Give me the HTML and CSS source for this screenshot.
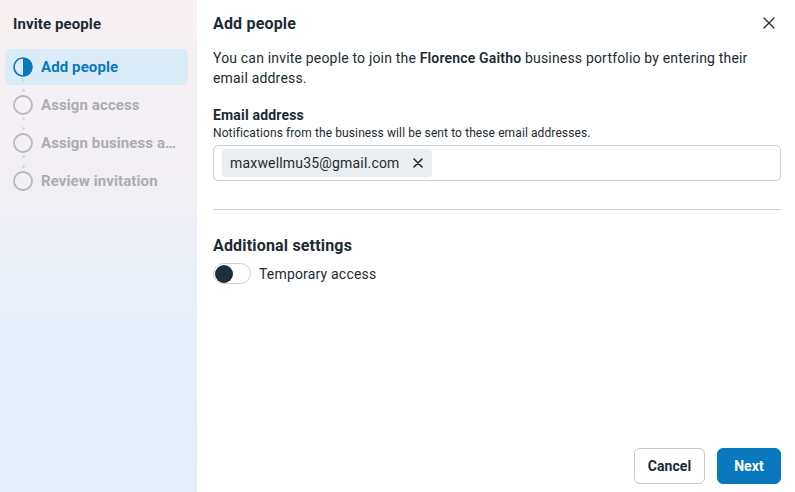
FILE: index.html
```html
<!DOCTYPE html>
<html>
<head>
<meta charset="utf-8">
<link rel="stylesheet" href="styles.css">
</head>
<body>
<div class="app">
  <aside class="sidebar">
    <div class="side-title">Invite people</div>
    <ul class="steps">
      <li class="step active">
        <svg class="step-icon" width="20" height="20" viewBox="0 0 20 20"><circle cx="10" cy="10" r="9" fill="none" stroke="#0a78be" stroke-width="1.6"/><path d="M10 1 A9 9 0 0 1 10 19 Z" fill="#0a78be"/></svg>
        <span>Add people</span>
      </li>
      <li class="step">
        <svg class="step-icon" width="20" height="20" viewBox="0 0 20 20"><circle cx="10" cy="10" r="9" fill="none" stroke="#b4b9be" stroke-width="1.8"/></svg>
        <span>Assign access</span>
      </li>
      <li class="step">
        <svg class="step-icon" width="20" height="20" viewBox="0 0 20 20"><circle cx="10" cy="10" r="9" fill="none" stroke="#b4b9be" stroke-width="1.8"/></svg>
        <span>Assign business a…</span>
      </li>
      <li class="step last">
        <svg class="step-icon" width="20" height="20" viewBox="0 0 20 20"><circle cx="10" cy="10" r="9" fill="none" stroke="#b4b9be" stroke-width="1.8"/></svg>
        <span>Review invitation</span>
      </li>
    </ul>
  </aside>
  <main class="main">
    <div class="header">
      <h1 class="title">Add people</h1>
      <svg class="close" width="12" height="12" viewBox="0 0 12 12"><path d="M1 1 L11 11 M11 1 L1 11" stroke="#1c2b33" stroke-width="1.3" stroke-linecap="round"/></svg>
    </div>
    <p class="intro">You can invite people to join the <b>Florence Gaitho</b> business portfolio by entering their email address.</p>
    <div class="label">Email address</div>
    <div class="hint">Notifications from the business will be sent to these email addresses.</div>
    <div class="input">
      <span class="chip">maxwellmu35@gmail.com
        <svg class="chip-x" width="10" height="10" viewBox="0 0 10 10"><path d="M1 1 L9 9 M9 1 L1 9" stroke="#1c2b33" stroke-width="1.6" stroke-linecap="round"/></svg>
      </span>
    </div>
    <hr class="divider">
    <h2 class="section">Additional settings</h2>
    <div class="toggle-row">
      <span class="toggle"><span class="knob"></span></span>
      <span>Temporary access</span>
    </div>
    <div class="footer">
      <button class="btn cancel">Cancel</button>
      <button class="btn next">Next</button>
    </div>
  </main>
</div>
</body>
</html>
```

FILE: styles.css
```css
* { box-sizing: border-box; }
html, body { margin: 0; padding: 0; height: 100%; }
body {
  font-family: Roboto, "Liberation Sans", sans-serif;
  color: #1c2b33;
  background: #fff;
}
.app {
  display: flex;
  height: 492px;
}
.sidebar {
  width: 197px;
  flex: none;
  background: linear-gradient(180deg, #f8f1f2 0%, #f2eff4 35%, #e6eff9 65%, #e2eef9 100%);
  padding: 13px 9px 0 5px;
}
.side-title {
  font-size: 15px;
  font-weight: 700;
  line-height: 22px;
  padding-left: 8px;
  margin-bottom: 14px;
  letter-spacing: 0.1px;
}
.steps {
  list-style: none;
  margin: 0;
  padding: 0;
  display: flex;
  flex-direction: column;
  gap: 2px;
}
.step {
  position: relative;
  height: 36px;
  display: flex;
  align-items: center;
  gap: 8px;
  padding-left: 8px;
  border-radius: 6px;
  font-size: 15px;
  font-weight: 700;
  color: #a9aeb3;
  white-space: nowrap;
  letter-spacing: 0.1px;
}
.step.active {
  background: #dcebf8;
  color: #0a78be;
}
.step:not(.last)::after {
  content: "";
  position: absolute;
  left: 17px;
  top: 30px;
  width: 3px;
  height: 3px;
  border-radius: 50%;
  background: #d6d9dd;
  box-shadow: 0 10px 0 #d6d9dd;
}
.step-icon { flex: none; }
.main {
  flex: 1;
  display: flex;
  flex-direction: column;
  padding: 13px 14px 8px 16px;
  font-size: 14px;
  letter-spacing: 0.18px;
}
.header {
  display: flex;
  justify-content: space-between;
  align-items: center;
  height: 22px;
}
.title {
  margin: 0;
  font-size: 16px;
  font-weight: 700;
  line-height: 22px;
}
.close { margin-right: 6px; margin-top: -2px; }
.intro {
  margin: 14px 0 0 0;
  line-height: 19.5px;
  color: #1c2b33;
  padding-right: 20px;
}
.intro b { font-weight: 600; }
.label {
  margin-top: 18px;
  font-weight: 700;
  line-height: 18px;
}
.hint {
  font-size: 12px;
  line-height: 17px;
  padding-top: 1px;
  letter-spacing: 0.1px;
  color: #1c2b33;
}
.input {
  margin-top: 3px;
  height: 36px;
  border: 1px solid #ced0d4;
  border-radius: 5px;
  padding: 3px 8px;
  display: flex;
  align-items: center;
}
.chip {
  height: 28px;
  display: inline-flex;
  align-items: center;
  background: #ebeef1;
  border-radius: 4px;
  padding: 0 9px 0 8px;
  font-size: 14px;
}
.chip-x { margin-left: 13px; }
.divider {
  margin: 28px 0 0 0;
  border: 0;
  border-top: 1px solid #cfd3d7;
  height: 0;
}
.section {
  margin: 26px 0 0 0;
  font-size: 16px;
  font-weight: 700;
  line-height: 20px;
}
.toggle-row {
  margin-top: 7px;
  display: flex;
  align-items: center;
  gap: 8px;
  line-height: 20px;
}
.toggle {
  width: 38px;
  height: 21px;
  border: 1px solid #ccd0d4;
  border-radius: 11px;
  background: #fff;
  display: flex;
  align-items: center;
  padding-left: 1px;
}
.knob {
  width: 18px;
  height: 18px;
  border-radius: 50%;
  background: #1f2d38;
}
.footer {
  margin-top: auto;
  display: flex;
  justify-content: flex-end;
  gap: 12px;
}
.btn {
  height: 36px;
  border-radius: 6px;
  font-family: inherit;
  font-size: 14px;
  font-weight: 700;
  padding: 0;
  cursor: pointer;
  letter-spacing: 0.1px;
}
.cancel {
  width: 71px;
  background: #fff;
  border: 1px solid #c4c8cc;
  color: #1c2b33;
}
.next {
  width: 64px;
  background: #0a78be;
  border: 1px solid #0a78be;
  color: #fff;
}
```
